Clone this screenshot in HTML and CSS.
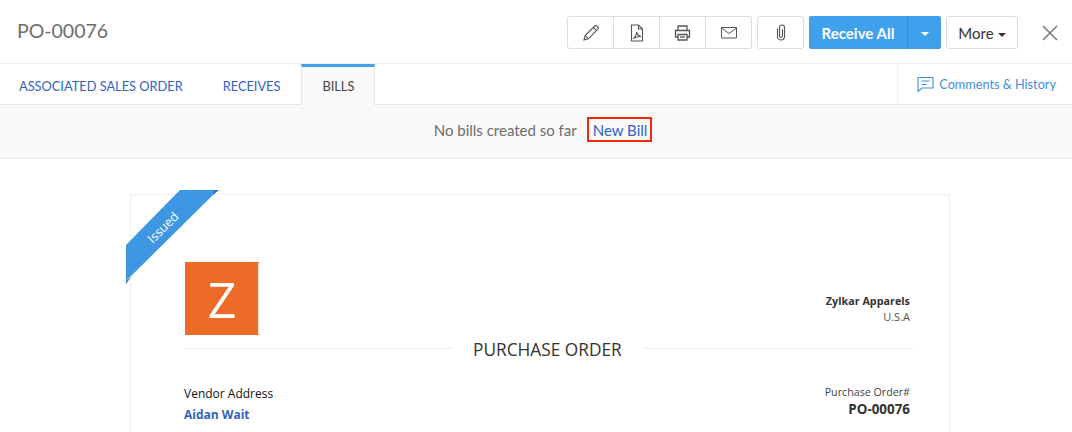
FILE: index.html
```html
<!DOCTYPE html>
<html lang="en">
<head>
    <meta charset="UTF-8">
    <meta name="viewport" content="width=device-width, initial-scale=1.0">
    <title>PO-00076</title>
    <link rel="stylesheet" href="styles.css">
</head>
<body>
    <header class="top-bar">
        <h1 class="po-title">PO-00076</h1>
        <div class="actions">
            <div class="btn-group">
                <button class="icon-btn" title="Edit">
                    <svg width="18" height="18" viewBox="0 0 18 18" fill="none" stroke="#555" stroke-width="1.1"><path d="M2 16l1.2-4.4L12.8 2a1.5 1.5 0 0 1 2.1 0l1 1a1.5 1.5 0 0 1 0 2.1L6.4 14.8 2 16z"/><path d="M11.4 3.4l3.2 3.2M3.2 11.6l3.2 3.2"/></svg>
                </button>
                <button class="icon-btn" title="PDF">
                    <svg width="14" height="18" viewBox="0 0 14 18" fill="none" stroke="#555" stroke-width="1.1"><path d="M1.5 1h7l4 4v12h-11z"/><path d="M8.5 1v4h4"/><path d="M3 14.5c2-1 3.5-3.5 3.6-6.5.6 2.400 2 4 4.400 4.500-2.500-.2-5 .4-8 2z"/></svg>
                </button>
                <button class="icon-btn" title="Print">
                    <svg width="17" height="16" viewBox="0 0 17 16" fill="none" stroke="#555" stroke-width="1.300"><path d="M4 5V1h9v4"/><path d="M4 12H1.500V5.500h14V12H13"/><path d="M4 9.500h9v5.500H4z"/><path d="M6 12h5"/></svg>
                </button>
                <button class="icon-btn" title="Email">
                    <svg width="16" height="12" viewBox="0 0 16 12" fill="none" stroke="#555" stroke-width="1"><path d="M.5.500h15v10.500H.5z"/><path d="M.5 1l7.500 5.500L15.500 1"/></svg>
                </button>
            </div>
            <button class="icon-btn single" title="Attach">
                <svg width="10" height="17" viewBox="0 0 10 17" fill="none" stroke="#555" stroke-width="1.100"><path d="M6.500 5v7a1.500 1.500 0 0 1-3 0V3.500a2.500 2.500 0 0 1 5 0V12.500a3.500 3.500 0 0 1-7 0V4.500"/></svg>
            </button>
            <div class="receive">
                <button class="receive-btn">Receive All</button>
                <button class="receive-toggle"><span class="caret"></span></button>
            </div>
            <button class="more-btn">More<span class="caret dark"></span></button>
            <svg class="close" width="16" height="16" viewBox="0 0 16 16" stroke="#777" stroke-width="1.500"><path d="M1 1l14 14M15 1L1 15"/></svg>
        </div>
    </header>

    <nav class="tabs">
        <a class="tab">ASSOCIATED SALES ORDER</a>
        <a class="tab wide">RECEIVES</a>
        <a class="tab active">BILLS</a>
        <a class="comments">
            <svg width="17" height="17" viewBox="0 0 17 17" fill="none" stroke="#408dd9" stroke-width="1.100"><path d="M1 1.500h15v10.500H5L1 15.500z"/><path d="M4.500 5h8M4.500 8.500h5"/></svg>
            Comments &amp; History
        </a>
    </nav>

    <div class="notice">
        <span>No bills created so far</span>
        <a class="new-bill">New Bill</a>
    </div>

    <main class="page">
        <section class="doc">
            <svg class="ribbon" width="93" height="94" viewBox="0 0 93 94">
                <path d="M54 0h38L0 91V55z" fill="#3d97e2"/>
                <path d="M87 5l6-5h-5zM0 94l5-7-5 4z" fill="#2a6fc0"/>
            </svg>
            <span class="ribbon-text">Issued</span>

            <div class="doc-head">
                <div class="logo">Z</div>
                <div class="org">
                    <div class="org-name">Zylkar Apparels</div>
                    <div>U.S.A</div>
                </div>
            </div>

            <div class="doc-title"><span>PURCHASE ORDER</span></div>

            <div class="doc-info">
                <div>
                    <div class="vendor-label">Vendor Address</div>
                    <a class="vendor-name">Aidan Wait</a>
                </div>
                <div class="po-info">
                    <div>Purchase Order#</div>
                    <div class="po-number">PO-00076</div>
                </div>
            </div>
        </section>
    </main>
</body>
</html>
```

FILE: styles.css
```css
* {
    margin: 0;
    padding: 0;
    box-sizing: border-box;
}

html, body {
    height: 432px;
    overflow: hidden;
}

body {
    font-family: 'Lato', 'Liberation Sans', sans-serif;
    background: #fff;
    color: #333;
}

button {
    font-family: inherit;
    cursor: pointer;
}

/* Top bar */
.top-bar {
    height: 64px;
    display: flex;
    align-items: center;
    justify-content: space-between;
    padding: 2px 14px 0 17px;
    border-bottom: 1px solid #eee;
}

.po-title {
    font-size: 19.500px;
    font-weight: 400;
    color: #6d6d6d;
    margin-top: -5px;
}

.actions {
    display: flex;
    align-items: center;
}

.btn-group {
    display: flex;
    margin-right: 5px;
}

.icon-btn {
    width: 46px;
    height: 33px;
    display: flex;
    align-items: center;
    justify-content: center;
    background: #fff;
    border: 1px solid #ddd;
    border-left: none;
}

.btn-group .icon-btn:first-child {
    width: 47px;
    border-left: 1px solid #ddd;
    border-radius: 3px 0 0 3px;
}

.btn-group .icon-btn:last-child {
    border-radius: 0 3px 3px 0;
}

.icon-btn.single {
    width: 47px;
    border-left: 1px solid #ddd;
    border-radius: 3px;
    margin-right: 5px;
}

.receive {
    display: flex;
    height: 33px;
    margin-right: 5px;
}

.receive-btn {
    width: 98px;
    background: #3fa0ec;
    color: #fff;
    border: none;
    border-radius: 2px 0 0 2px;
    font-size: 15px;
    font-weight: 700;
}

.receive-toggle {
    width: 34px;
    background: #3fa0ec;
    border: none;
    border-left: 1px solid #3490da;
    border-radius: 0 2px 2px 0;
}

.caret {
    display: inline-block;
    width: 0;
    height: 0;
    border-top: 4px solid #fff;
    border-left: 4px solid transparent;
    border-right: 4px solid transparent;
    vertical-align: middle;
}

.caret.dark {
    border-top-color: #333;
    margin-left: 4px;
}

.more-btn {
    width: 72px;
    height: 33px;
    background: #fff;
    color: #333;
    border: 1px solid #ddd;
    border-radius: 3px;
    font-size: 15px;
    margin-right: 24px;
}

/* Tabs */
.tabs {
    height: 41px;
    display: flex;
    align-items: stretch;
    border-bottom: 1px solid #e6e6e6;
    font-size: 12.800px;
}

.tab {
    display: flex;
    align-items: center;
    padding: 3px 20px 0;
    color: #2f62c4;
}

.tab:first-child {
    padding-left: 19px;
}

.tab.wide {
    padding-right: 21px;
}

.tab.active {
    height: 41px;
    background: #f9f9f9;
    color: #444;
    border: 1px solid #e6e6e6;
    border-top: 3px solid #3fa0ec;
    border-bottom: none;
    padding-top: 0;
}

.comments {
    margin-left: auto;
    display: flex;
    align-items: center;
    gap: 5px;
    padding: 0 16px 0 19px;
    border-left: 1px solid #eee;
    color: #408dd9;
    font-size: 12.700px;
}

/* Notice under the tabs */
.notice {
    height: 54px;
    display: flex;
    align-items: center;
    justify-content: center;
    gap: 10px;
    padding: 0 0 4px 14px;
    background: #f9f9f9;
    border-bottom: 1px solid #e9e9e9;
    font-size: 15px;
    color: #6d6d6d;
}

.new-bill {
    padding: 1.500px 3px 1.500px 4px;
    border: 2px solid #f02b0c;
    color: #2f62c4;
    line-height: 18px;
}

/* Document preview */
.page {
    padding: 35px 122px 0 130px;
}

.doc {
    position: relative;
    height: 238px;
    padding: 67px 39px 0 53px;
    border: 1px solid #eee;
    border-bottom: none;
    font-family: 'Open Sans', 'Liberation Sans', sans-serif;
    font-size: 12px;
    color: #333;
}

.ribbon {
    position: absolute;
    left: -5px;
    top: -5px;
}

.ribbon-text {
    position: absolute;
    left: 13px;
    top: 24px;
    transform: rotate(-45deg);
    color: #fff;
    font-size: 12.500px;
}

.doc-head {
    display: flex;
    justify-content: space-between;
    align-items: flex-end;
}

.logo {
    position: relative;
    width: 74px;
    height: 73px;
    margin-left: 1px;
    display: flex;
    align-items: center;
    justify-content: center;
    background: #ec6b26;
    color: #fff;
    font-size: 50px;
}

/* thin light seam near the right edge of the logo */
.logo::after {
    content: '';
    position: absolute;
    top: 1px;
    bottom: 1px;
    right: 0;
    width: 1px;
    background: #fbe3d4;
}

.org {
    text-align: right;
    font-size: 11px;
    line-height: 16px;
    padding-bottom: 10px;
    color: #555;
}

.org-name {
    font-size: 10.800px;
    font-weight: 700;
    color: #333;
}

.doc-title {
    display: flex;
    align-items: center;
    gap: 21px;
    margin-right: -3px;
    height: 26px;
    font-size: 17.300px;
    color: #333;
}

.doc-title span {
    padding-top: 2px;
}

.doc-title::before {
    content: '';
    width: 268px;
    border-top: 1px solid #eee;
}

.doc-title::after {
    content: '';
    flex: 1;
    border-top: 1px solid #eee;
}

.doc-info {
    display: flex;
    justify-content: space-between;
    margin-top: 24px;
}

.vendor-label {
    color: #111;
    line-height: 18px;
}

.vendor-name {
    display: block;
    margin-top: 3px;
    font-weight: 700;
    color: #2f62c4;
}

.po-info {
    margin-top: -1px;
    text-align: right;
    font-size: 10.700px;
    line-height: 16px;
    color: #444;
}

.po-number {
    font-size: 13.400px;
    font-weight: 700;
    color: #333;
    line-height: 18px;
}
```
